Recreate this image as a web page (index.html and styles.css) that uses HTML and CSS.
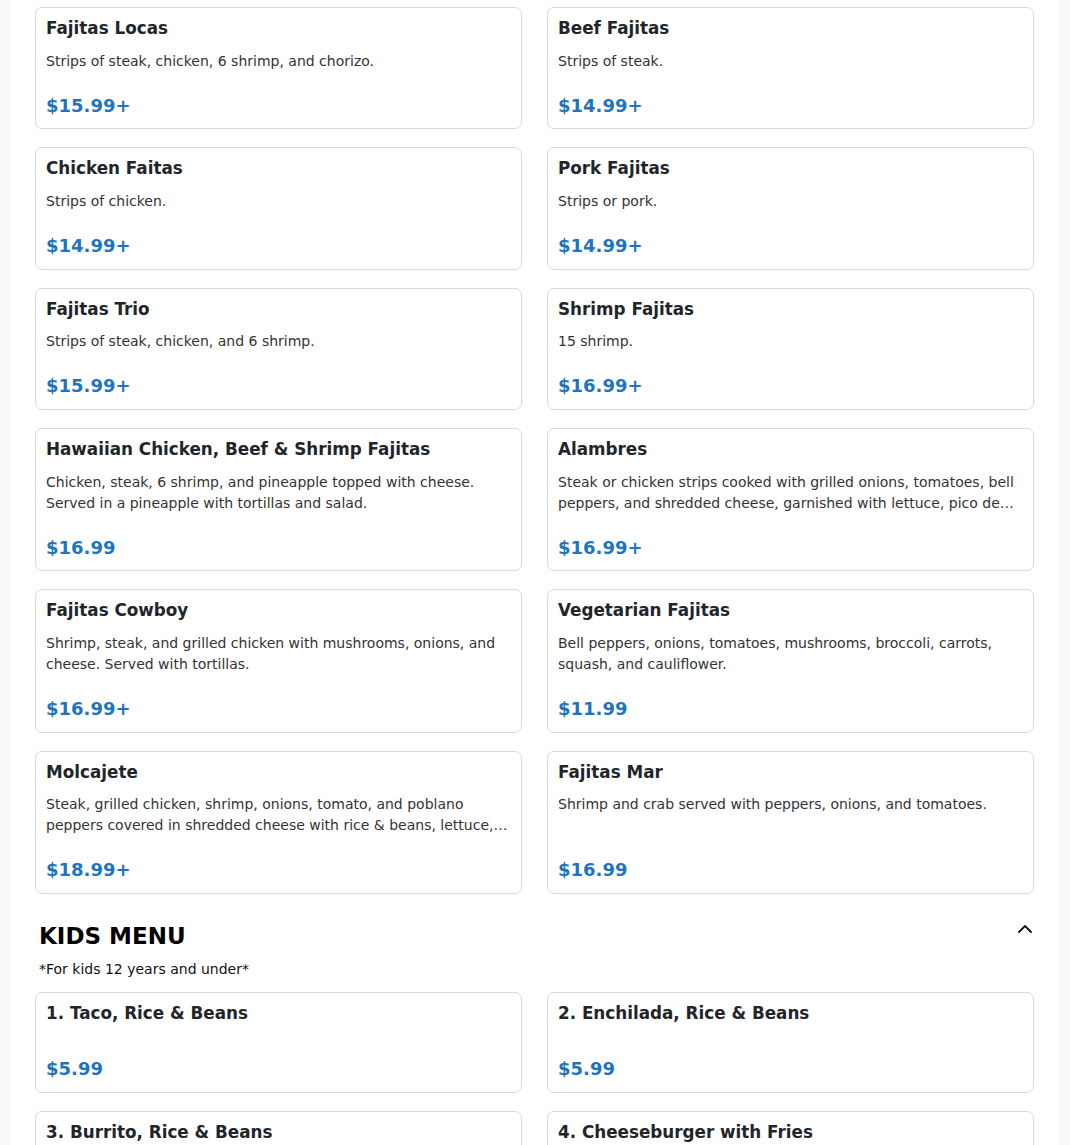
FILE: index.html
```html
<!DOCTYPE html>
<html lang="en">
<head>
<meta charset="utf-8">
<title>Menu</title>
<link rel="stylesheet" href="styles.css">
</head>
<body>
<main class="page">
  <section class="section">
    <div class="grid">
      <article class="card">
        <h3 class="card-title">Fajitas Locas</h3>
        <p class="card-desc">Strips of steak, chicken, 6 shrimp, and chorizo.</p>
        <div class="card-price">$15.99+</div>
      </article>
      <article class="card">
        <h3 class="card-title">Beef Fajitas</h3>
        <p class="card-desc">Strips of steak.</p>
        <div class="card-price">$14.99+</div>
      </article>
      <article class="card">
        <h3 class="card-title">Chicken Faitas</h3>
        <p class="card-desc">Strips of chicken.</p>
        <div class="card-price">$14.99+</div>
      </article>
      <article class="card">
        <h3 class="card-title">Pork Fajitas</h3>
        <p class="card-desc">Strips or pork.</p>
        <div class="card-price">$14.99+</div>
      </article>
      <article class="card">
        <h3 class="card-title">Fajitas Trio</h3>
        <p class="card-desc">Strips of steak, chicken, and 6 shrimp.</p>
        <div class="card-price">$15.99+</div>
      </article>
      <article class="card">
        <h3 class="card-title">Shrimp Fajitas</h3>
        <p class="card-desc">15 shrimp.</p>
        <div class="card-price">$16.99+</div>
      </article>
      <article class="card">
        <h3 class="card-title">Hawaiian Chicken, Beef &amp; Shrimp Fajitas</h3>
        <p class="card-desc">Chicken, steak, 6 shrimp, and pineapple topped with cheese. Served in a pineapple with tortillas and salad.</p>
        <div class="card-price">$16.99</div>
      </article>
      <article class="card">
        <h3 class="card-title">Alambres</h3>
        <p class="card-desc">Steak or chicken strips cooked with grilled onions, tomatoes, bell peppers, and shredded cheese, garnished with lettuce, pico de gallo, sour cream and guacamole. Served with tortillas.</p>
        <div class="card-price">$16.99+</div>
      </article>
      <article class="card">
        <h3 class="card-title">Fajitas Cowboy</h3>
        <p class="card-desc">Shrimp, steak, and grilled chicken with mushrooms, onions, and cheese. Served with tortillas.</p>
        <div class="card-price">$16.99+</div>
      </article>
      <article class="card">
        <h3 class="card-title">Vegetarian Fajitas</h3>
        <p class="card-desc">Bell peppers, onions, tomatoes, mushrooms, broccoli, carrots, squash, and cauliflower.</p>
        <div class="card-price">$11.99</div>
      </article>
      <article class="card">
        <h3 class="card-title">Molcajete</h3>
        <p class="card-desc">Steak, grilled chicken, shrimp, onions, tomato, and poblano peppers covered in shredded cheese with rice &amp; beans, lettuce, pico de gallo, sour cream and tortillas.</p>
        <div class="card-price">$18.99+</div>
      </article>
      <article class="card">
        <h3 class="card-title">Fajitas Mar</h3>
        <p class="card-desc">Shrimp and crab served with peppers, onions, and tomatoes.</p>
        <div class="card-price">$16.99</div>
      </article>
    </div>
  </section>

  <section class="section section-kids">
    <header class="section-head">
      <div class="section-head-text">
        <h2 class="section-title">KIDS MENU</h2>
        <p class="section-note">*For kids 12 years and under*</p>
      </div>
      <svg class="chevron" width="16" height="16" viewBox="0 0 16 16" aria-hidden="true">
        <path d="M2 11 L8 5 L14 11" fill="none" stroke="#111" stroke-width="1.8" stroke-linecap="round" stroke-linejoin="round"/>
      </svg>
    </header>
    <div class="grid">
      <article class="card">
        <h3 class="card-title">1. Taco, Rice &amp; Beans</h3>
        <p class="card-desc"></p>
        <div class="card-price">$5.99</div>
      </article>
      <article class="card">
        <h3 class="card-title">2. Enchilada, Rice &amp; Beans</h3>
        <p class="card-desc"></p>
        <div class="card-price">$5.99</div>
      </article>
      <article class="card">
        <h3 class="card-title">3. Burrito, Rice &amp; Beans</h3>
        <p class="card-desc"></p>
        <div class="card-price">$5.99</div>
      </article>
      <article class="card">
        <h3 class="card-title">4. Cheeseburger with Fries</h3>
        <p class="card-desc"></p>
        <div class="card-price">$5.99</div>
      </article>
    </div>
  </section>
</main>
</body>
</html>
```

FILE: styles.css
```css
html, body {
  margin: 0;
  padding: 0;
}

body {
  background: #f8f9fa;
  font-family: "DejaVu Sans", "Noto Sans", sans-serif;
  color: #212529;
  overflow: hidden;
}

.page {
  margin: 0 11px;
  background: #ffffff;
  padding: 7px 25px 40px 24px;
  min-height: 1200px;
}

.grid {
  display: grid;
  grid-template-columns: 1fr 1fr;
  column-gap: 25px;
  row-gap: 18px;
}

.card {
  display: flex;
  flex-direction: column;
  border: 1px solid #d9d9d9;
  border-radius: 7px;
  padding: 10px 10px 12.2px;
  background: #fff;
}

.card-title {
  margin: 0 0 12.4px;
  font-size: 16.8px;
  line-height: 1.2;
  font-weight: 700;
  color: #212529;
}

.card-desc {
  margin: 0 0 23px;
  font-size: 14px;
  line-height: 21px;
  color: #333333;
  display: -webkit-box;
  -webkit-line-clamp: 2;
  -webkit-box-orient: vertical;
  overflow: hidden;
}

.card-price {
  margin-top: auto;
  font-size: 18px;
  line-height: 1.2;
  font-weight: 700;
  color: #1f74c0;
}

.section-kids {
  margin-top: 29px;
}

.section-head {
  display: flex;
  justify-content: space-between;
  align-items: flex-start;
  padding: 0 1px 0 4px;
  margin-bottom: 12px;
}

.section-title {
  margin: 0 0 8.2px;
  font-size: 23px;
  line-height: 1.2;
  font-weight: 700;
  color: #000;
}

.section-note {
  margin: 0;
  font-size: 14px;
  line-height: 21px;
  color: #111;
}

.chevron {
  display: block;
  flex: none;
  margin-top: -2px;
}
```
